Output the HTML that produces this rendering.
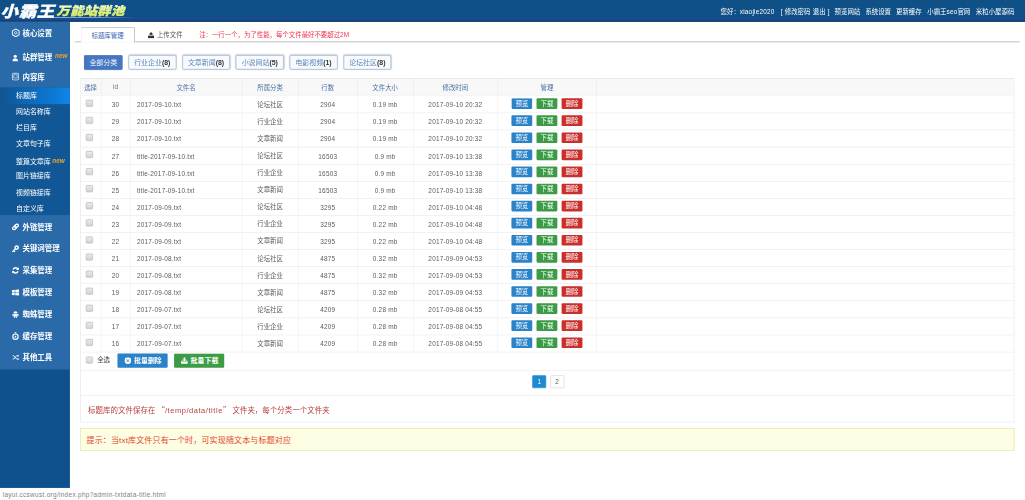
<!DOCTYPE html>
<html lang="zh-CN">
<head>
<meta charset="utf-8">
<title>小霸王万能站群池</title>
<style>
html,body{margin:0;padding:0;background:#fff;overflow:hidden;}
body{width:1025px;height:500px;position:relative;font-family:"Liberation Sans","Noto Sans CJK SC",sans-serif;}
#stage{position:absolute;left:0;top:0;width:1920px;height:937px;transform:scale(0.53385);transform-origin:0 0;font-size:12px;color:#444;background:#fff;}
#hdr{position:absolute;left:0;top:0;width:1920px;height:40.7px;background:linear-gradient(#0f5086 0,#0f5086 68%,#18498a 78%,#114e92 90%,#0d3f6e 95%,#0a3152 100%);}
#logo1{position:absolute;left:1px;top:1px;font-size:29px;line-height:34px;font-weight:900;font-style:italic;color:#fff;letter-spacing:1px;transform:scaleX(1.13);transform-origin:0 0;-webkit-text-stroke:0.6px #fff;font-family:"Noto Sans CJK SC",sans-serif;}
#logo2{position:absolute;left:106px;top:4px;font-size:22px;line-height:28px;font-weight:900;font-style:italic;color:#e2f27a;letter-spacing:0.5px;transform:scaleX(1.13);transform-origin:0 0;-webkit-text-stroke:0.5px #e6f59a;background:linear-gradient(#ffffff 15%,#e6f59a 45%,#d9ee55 80%);-webkit-background-clip:text;background-clip:text;-webkit-text-fill-color:transparent;padding-right:6px;font-family:"Noto Sans CJK SC",sans-serif;}
#logoline{position:absolute;left:70px;top:31.5px;width:186px;height:1.6px;background:linear-gradient(90deg,#fff,#cfe0f5 60%,rgba(255,255,255,0));}
#nav{position:absolute;right:20px;top:0;height:40px;line-height:44px;color:#fff;font-size:12px;white-space:nowrap;}
#nav span{margin-left:10.5px;}
#side{position:absolute;left:0;top:40.5px;width:130.5px;height:873.5px;background:#0f518d;}
#side .main{position:absolute;left:0;top:0;width:100%;height:651px;background:#2b6aa8;}
#side .sub{position:absolute;left:0;top:123px;width:100%;height:239px;background:#125795;}
#side .act{position:absolute;left:0;top:123px;width:100%;height:31px;background:linear-gradient(90deg,#0f5593,#0d7ddc 85%,#1186e6);}
.m{position:absolute;left:42px;font-size:14px;font-weight:bold;color:#fff;line-height:20px;white-space:nowrap;}
.s{position:absolute;left:30px;font-size:13px;color:#fff;line-height:20px;white-space:nowrap;}
.new{position:absolute;font-size:12px;font-style:italic;font-weight:bold;color:#f0a428;line-height:12px;}
.ic{position:absolute;}
#status{position:absolute;left:0;top:916.8px;width:342px;height:21px;background:#fff;color:#808080;font-size:12px;line-height:21px;text-indent:5px;box-sizing:border-box;white-space:nowrap;letter-spacing:0.6px;}
#tabs{position:absolute;left:140px;top:52px;width:1770px;height:26px;border-bottom:1.8px solid #8a8a8a;}
#tab1{position:absolute;left:10.5px;top:-1.5px;width:102px;height:29.5px;border:1.8px solid #8f8f8f;border-bottom:1.8px solid #fff;box-sizing:border-box;background:#fff;color:#4166b2;text-align:center;line-height:30px;border-radius:3px 3px 0 0;z-index:2;}
#tab2{position:absolute;left:154px;top:0;line-height:26px;color:#555;}
#note{position:absolute;left:233px;top:0;line-height:26px;color:#f23350;}
.cat{position:absolute;top:103px;height:28px;box-sizing:border-box;border-radius:4px;text-align:center;line-height:24px;font-size:13px;white-space:nowrap;}
.cat.on{left:157px;width:73px;background:#4476c2;border:1px solid #3b67ad;color:#f2f6fc;line-height:26px;border-radius:3px;}
.cat.off{width:90.5px;border:2px solid #bdc9d9;color:#5c84b8;background:#f8fbfe;box-shadow:0 0 2px rgba(120,140,170,0.35);}
.cat.off b{color:#333;}
#panel{position:absolute;left:150px;top:147px;width:1750px;height:644px;border:1px solid #e2e2e2;border-top-color:#d4d4d4;box-sizing:border-box;background:#fff;}
table{border-collapse:collapse;position:absolute;left:0;top:0;width:1748px;table-layout:fixed;}
th{height:29.6px;padding:0 0 1px 0 !important;background:#f8f8f8;color:#4a72a6;font-weight:normal;border-right:1px solid #e6e6e6;border-bottom:1px solid #ececec;padding:0;font-size:12px;}
td{height:31px;padding:0 !important;border-right:1px solid #ececec;border-bottom:1px solid #e6e6e6;text-align:center;padding:0;font-size:12px;color:#5a5a5a;white-space:nowrap;}
td u{text-decoration-color:#aaa;}
td.l{text-align:left;padding-left:12px !important;}
.n{letter-spacing:0.4px;}
td.n{height:28px;padding-top:3px !important;}
td i{font-style:normal;position:relative;top:-0.8px;}
.q{font-family:"Noto Sans CJK SC",sans-serif;}
th:last-child,td:last-child{border-right:none;}
.cb{position:relative;left:-2px;top:-2px;display:inline-block;width:11px;height:11px;border:1px solid #a9a9a9;border-radius:2px;background:linear-gradient(#ececec,#d2d2d2);vertical-align:middle;}
.b{position:relative;top:-1.5px;display:inline-block;width:39px;height:20px;line-height:20px;color:#fff;border-radius:2px;margin:0 4px;vertical-align:middle;font-size:12px;}
.b1{background:#2a82c9;}.b2{background:#3c9c46;}.b3{background:#c9302c;}
#ops{position:absolute;left:0;top:513px;width:1747px;height:32px;border-bottom:1px solid #e6e6e6;}
.bb{position:absolute;top:1px;height:27px;width:94px;line-height:27px;color:#fff;font-weight:bold;border-radius:2px;font-size:13px;box-sizing:border-box;padding-left:31px;white-space:nowrap;}
.bb svg{position:absolute;left:13px;top:7px;}
#pg{position:absolute;left:0;top:546px;width:1747px;height:46px;border-bottom:1px solid #e6e6e6;}
.p{position:absolute;top:9px;width:26px;height:24px;box-sizing:border-box;line-height:22px;text-align:center;border:1px solid #ccc;border-radius:2px;color:#555;font-size:12px;}
#info{position:absolute;left:14px;top:608px;font-size:14px;color:#b5403c;line-height:22px;white-space:nowrap;}
#tip{position:absolute;left:150px;top:802px;width:1750px;height:42px;box-sizing:border-box;border:1px solid #dde39b;background:#fdfde4;color:#e2452b;font-size:15px;line-height:43px;letter-spacing:0.28px;padding-left:11px;white-space:nowrap;}
</style>
</head>
<body>
<div id="stage">
<div id="hdr">
  <div id="logo1">小霸王</div>
  <div id="logo2">万能站群池</div>
  <div id="logoline"></div>
  <div id="nav"><span>您好：<span class="n" style="margin:0">xiaojie2020</span></span><span style="word-spacing:1px;margin-left:11.5px">[ 修改密码 退出 ]</span><span style="margin-left:9.3px">预览网站</span><span style="margin-left:9.7px">系统设置</span><span style="margin-left:9.3px">更新缓存</span><span>小霸王<span class="n" style="margin:0">seo</span>官网</span><span>米粒小屋源码</span></div>
</div>
<div id="side">
  <div class="main"></div>
  <div class="sub"></div>
  <div class="act"></div>

  <svg class="ic" style="left:21px;top:12px" width="17" height="17" viewBox="0 0 17 17"><path d="M8.5 1.2 L14.8 4.8 V12.2 L8.5 15.8 L2.2 12.2 V4.8 Z" fill="none" stroke="#e8f1fb" stroke-width="2" stroke-linejoin="round"/><circle cx="8.5" cy="8.5" r="2.3" fill="none" stroke="#e8f1fb" stroke-width="1.6"/></svg>
  <svg class="ic" style="left:23px;top:61px" width="11" height="13" viewBox="0 0 11 13"><circle cx="5.5" cy="3.4" r="3" fill="#fff"/><path d="M0.3 13 C0.3 8.5 2.5 7.2 5.5 7.2 S10.7 8.5 10.7 13 Z" fill="#fff"/></svg>
  <svg class="ic" style="left:22px;top:95px" width="14" height="15" viewBox="0 0 14 15"><rect x="1" y="1" width="12" height="13" rx="2.5" fill="none" stroke="#e4eefa" stroke-width="1.8"/><rect x="4" y="4" width="6" height="6" fill="none" stroke="#e4eefa" stroke-width="1.2"/></svg>
  <svg class="ic" style="left:22px;top:377px" width="14" height="14" viewBox="0 0 14 14"><g transform="rotate(-45 7 7)" fill="none" stroke="#fff" stroke-width="2.3"><rect x="0.6" y="4.4" width="7.4" height="5.2" rx="2.6"/><rect x="6" y="4.4" width="7.4" height="5.2" rx="2.6"/></g></svg>
  <svg class="ic" style="left:22px;top:418px" width="14" height="14" viewBox="0 0 14 14"><circle cx="9.2" cy="4.8" r="3" fill="none" stroke="#fff" stroke-width="2.8"/><path d="M6.6 7.4 L1.6 12.4 M3.6 10.4 L5.6 12.4" stroke="#fff" stroke-width="2.4" stroke-linecap="round"/></svg>
  <svg class="ic" style="left:22px;top:458px" width="14" height="15" viewBox="0 0 14 15"><path d="M2.4 6 A4.8 4.8 0 0 1 11.4 5.4 M11.6 9 A4.8 4.8 0 0 1 2.6 9.6" fill="none" stroke="#fff" stroke-width="2.6"/><path d="M13.2 1.6 V6.6 H8.2 Z M0.8 13.4 V8.4 H5.8 Z" fill="#fff"/></svg>
  <svg class="ic" style="left:22px;top:501px" width="14" height="12" viewBox="0 0 14 12"><path d="M0 1.6 L5.6 0.9 V5.5 H0 Z M6.6 0.8 L14 0 V5.5 H6.6 Z M0 6.5 H5.6 V11.1 L0 10.4 Z M6.6 6.5 H14 V12 L6.6 11.2 Z" fill="#fff"/></svg>
  <svg class="ic" style="left:23px;top:541px" width="12" height="14" viewBox="0 0 12 14"><path d="M2 5 A4 4 0 0 1 10 5 Z" fill="#fff"/><rect x="2" y="5.8" width="8" height="5.6" rx="1" fill="#fff"/><rect x="0" y="5.8" width="1.5" height="4.4" rx=".7" fill="#fff"/><rect x="10.5" y="5.8" width="1.5" height="4.4" rx=".7" fill="#fff"/><rect x="3.4" y="11" width="1.8" height="3" rx=".8" fill="#fff"/><rect x="6.8" y="11" width="1.8" height="3" rx=".8" fill="#fff"/></svg>
  <svg class="ic" style="left:22px;top:581px" width="14" height="15" viewBox="0 0 14 15"><circle cx="7" cy="8.6" r="5" fill="none" stroke="#fff" stroke-width="2.2"/><rect x="5.4" y="0.4" width="3.2" height="2.2" fill="#fff"/><circle cx="7" cy="8.6" r="1.6" fill="#fff"/></svg>
  <svg class="ic" style="left:23px;top:623px" width="13" height="11" viewBox="0 0 13 11"><path d="M0.5 2.5 H3 L8 8.5 H10.5 M0.5 8.5 H3 L8 2.5 H10.5" fill="none" stroke="#fff" stroke-width="1.6"/><path d="M10 0.4 L13 2.5 L10 4.6 Z M10 6.4 L13 8.5 L10 10.6 Z" fill="#fff"/></svg>
  <div class="m" style="top:11px">核心设置</div>
  <div class="m" style="top:57px">站群管理</div><div class="new" style="left:103px;top:57px">new</div>
  <div class="m" style="top:93px">内容库</div>
  <div class="s" style="top:129px">标题库</div>
  <div class="s" style="top:158px">网站名称库</div>
  <div class="s" style="top:189px">栏目库</div>
  <div class="s" style="top:219px">文章句子库</div>
  <div class="s" style="top:253px">整篇文章库</div><div class="new" style="left:98px;top:254px">new</div>
  <div class="s" style="top:279px">图片链接库</div>
  <div class="s" style="top:310px">视频链接库</div>
  <div class="s" style="top:340px">自定义库</div>
  <div class="m" style="top:374px">外链管理</div>
  <div class="m" style="top:415px">关键词管理</div>
  <div class="m" style="top:456px">采集管理</div>
  <div class="m" style="top:497px">模板管理</div>
  <div class="m" style="top:538px">蜘蛛管理</div>
  <div class="m" style="top:579px">缓存管理</div>
  <div class="m" style="top:619px">其他工具</div>
</div>
<div id="status">layui.ccswust.org/index.php?admin-txtdata-title.html</div>
<div id="tabs">
  <div id="tab1">标题库管理</div>
  <svg style="position:absolute;left:137px;top:8px" width="12" height="12" viewBox="0 0 12 12"><path d="M6 0 L9.4 3.6 H7.4 V5.6 H4.6 V3.6 H2.6 Z" fill="#333"/><path d="M0.3 7 H11.7 V11.6 H0.3 Z" fill="#333"/><path d="M2 6.4 L3 5 H9 L10 6.4" fill="none" stroke="#333" stroke-width="1.2"/></svg>
  <div id="tab2">上传文件</div>
  <div id="note">注：一行一个，为了性能，每个文件最好不要超过2M</div>
</div>
<div class="cat on">全部分类</div>
<div class="cat off" style="left:240px">行业企业<b>(8)</b></div>
<div class="cat off" style="left:340.7px">文章新闻<b>(8)</b></div>
<div class="cat off" style="left:441.4px">小说网站<b>(5)</b></div>
<div class="cat off" style="left:542.1px">电影视频<b>(1)</b></div>
<div class="cat off" style="left:642.8px">论坛社区<b>(8)</b></div>
<div id="panel">
<table>
<colgroup><col style="width:38px"><col style="width:55px"><col style="width:209px"><col style="width:106px"><col style="width:110px"><col style="width:105px"><col style="width:158px"><col style="width:185px"><col></colgroup>
<tr><th>选择</th><th class="n" style="color:#6b7686">id</th><th>文件名</th><th>所属分类</th><th>行数</th><th>文件大小</th><th>修改时间</th><th>管理</th><th></th></tr>
<tr><td><span class="cb"></span></td><td class="n">30</td><td class="l n">2017-09-10.txt</td><td><i>论坛社区</i></td><td class="n">2904</td><td class="n">0.19 mb</td><td class="n">2017-09-10 20:32</td><td><a class="b b1">预览</a><a class="b b2">下载</a><a class="b b3">删除</a></td><td></td></tr>
<tr><td><span class="cb"></span></td><td class="n">29</td><td class="l n">2017-09-10.txt</td><td><i>行业企业</i></td><td class="n">2904</td><td class="n">0.19 mb</td><td class="n">2017-09-10 20:32</td><td><a class="b b1">预览</a><a class="b b2">下载</a><a class="b b3">删除</a></td><td></td></tr>
<tr><td><span class="cb"></span></td><td class="n">28</td><td class="l n">2017-09-10.txt</td><td><i>文章新闻</i></td><td class="n">2904</td><td class="n">0.19 mb</td><td class="n">2017-09-10 20:32</td><td><a class="b b1">预览</a><a class="b b2">下载</a><a class="b b3">删除</a></td><td></td></tr>
<tr><td><span class="cb"></span></td><td class="n">27</td><td class="l n">title-2017-09-10.txt</td><td><i>论坛社区</i></td><td class="n">16503</td><td class="n">0.9 mb</td><td class="n">2017-09-10 13:38</td><td><a class="b b1">预览</a><a class="b b2">下载</a><a class="b b3">删除</a></td><td></td></tr>
<tr><td><span class="cb"></span></td><td class="n">26</td><td class="l n">title-2017-09-10.txt</td><td><i>行业企业</i></td><td class="n">16503</td><td class="n">0.9 mb</td><td class="n">2017-09-10 13:38</td><td><a class="b b1">预览</a><a class="b b2">下载</a><a class="b b3">删除</a></td><td></td></tr>
<tr><td><span class="cb"></span></td><td class="n">25</td><td class="l n">title-2017-09-10.txt</td><td><i>文章新闻</i></td><td class="n">16503</td><td class="n">0.9 mb</td><td class="n">2017-09-10 13:38</td><td><a class="b b1">预览</a><a class="b b2">下载</a><a class="b b3">删除</a></td><td></td></tr>
<tr><td><span class="cb"></span></td><td class="n">24</td><td class="l n">2017-09-09.txt</td><td><i>论坛社区</i></td><td class="n">3295</td><td class="n">0.22 mb</td><td class="n">2017-09-10 04:48</td><td><a class="b b1">预览</a><a class="b b2">下载</a><a class="b b3">删除</a></td><td></td></tr>
<tr><td><span class="cb"></span></td><td class="n">23</td><td class="l n">2017-09-09.txt</td><td><i>行业企业</i></td><td class="n">3295</td><td class="n">0.22 mb</td><td class="n">2017-09-10 04:48</td><td><a class="b b1">预览</a><a class="b b2">下载</a><a class="b b3">删除</a></td><td></td></tr>
<tr><td><span class="cb"></span></td><td class="n">22</td><td class="l n">2017-09-09.txt</td><td><i>文章新闻</i></td><td class="n">3295</td><td class="n">0.22 mb</td><td class="n">2017-09-10 04:48</td><td><a class="b b1">预览</a><a class="b b2">下载</a><a class="b b3">删除</a></td><td></td></tr>
<tr><td><span class="cb"></span></td><td class="n">21</td><td class="l n">2017-09-08.txt</td><td><i>论坛社区</i></td><td class="n">4875</td><td class="n">0.32 mb</td><td class="n">2017-09-09 04:53</td><td><a class="b b1">预览</a><a class="b b2">下载</a><a class="b b3">删除</a></td><td></td></tr>
<tr><td><span class="cb"></span></td><td class="n">20</td><td class="l n">2017-09-08.txt</td><td><i>行业企业</i></td><td class="n">4875</td><td class="n">0.32 mb</td><td class="n">2017-09-09 04:53</td><td><a class="b b1">预览</a><a class="b b2">下载</a><a class="b b3">删除</a></td><td></td></tr>
<tr><td><span class="cb"></span></td><td class="n">19</td><td class="l n">2017-09-08.txt</td><td><i>文章新闻</i></td><td class="n">4875</td><td class="n">0.32 mb</td><td class="n">2017-09-09 04:53</td><td><a class="b b1">预览</a><a class="b b2">下载</a><a class="b b3">删除</a></td><td></td></tr>
<tr><td><span class="cb"></span></td><td class="n">18</td><td class="l n">2017-09-07.txt</td><td><i>论坛社区</i></td><td class="n">4209</td><td class="n">0.28 mb</td><td class="n">2017-09-08 04:55</td><td><a class="b b1">预览</a><a class="b b2">下载</a><a class="b b3">删除</a></td><td></td></tr>
<tr><td><span class="cb"></span></td><td class="n">17</td><td class="l n">2017-09-07.txt</td><td><i>行业企业</i></td><td class="n">4209</td><td class="n">0.28 mb</td><td class="n">2017-09-08 04:55</td><td><a class="b b1">预览</a><a class="b b2">下载</a><a class="b b3">删除</a></td><td></td></tr>
<tr><td><span class="cb"></span></td><td class="n">16</td><td class="l n">2017-09-07.txt</td><td><i>文章新闻</i></td><td class="n">4209</td><td class="n">0.28 mb</td><td class="n">2017-09-08 04:55</td><td><a class="b b1">预览</a><a class="b b2">下载</a><a class="b b3">删除</a></td><td></td></tr>
</table>
<div id="ops">
  <span class="cb" style="position:absolute;left:10px;top:7px"></span>
  <span style="position:absolute;left:31px;top:0;line-height:27px;color:#444">全选</span>
  <div class="bb" style="left:69px;background:#2a82c9"><svg width="13" height="13" viewBox="0 0 13 13"><circle cx="6.5" cy="6.5" r="6.3" fill="#fff"/><path d="M4.2 4.2 L8.8 8.8 M8.8 4.2 L4.2 8.8" stroke="#2a82c9" stroke-width="1.8"/></svg>批量删除</div>
  <div class="bb" style="left:175px;background:#3c9c46"><svg width="13" height="13" viewBox="0 0 13 13"><path d="M6.5 8 L2.6 4.2 H5 V0.3 H8 V4.2 H10.4 Z" fill="#fff"/><path d="M0.3 8.2 L2.2 5.6 H3.4 L1.9 8.2 H11.1 L9.6 5.6 H10.8 L12.7 8.2 V12.6 H0.3 Z" fill="#fff"/></svg>批量下载</div>
</div>
<div id="pg">
  <div class="p" style="left:846px;background:#1f8ad0;border-color:#1f8ad0;color:#fff">1</div>
  <div class="p" style="left:879.5px">2</div>
</div>
<div id="info">标题库的文件保存在 <span class="q">“</span><span style="letter-spacing:1.05px">/temp/data/title</span><span class="q">”</span> 文件夹，每个分类一个文件夹</div>
</div>
<div id="tip">提示：当txt库文件只有一个时，可实现随文本与标题对应</div>
</div>
</body>
</html>
